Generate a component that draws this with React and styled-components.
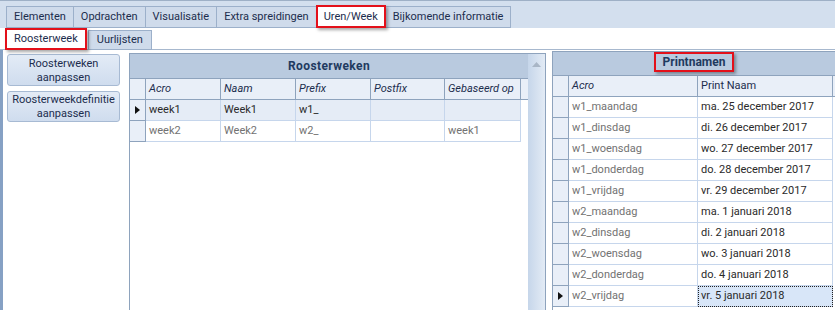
import React from 'react';
import styled, { createGlobalStyle, css } from 'styled-components';

const RED = '#e3101a';
const LINE = '#8ea3bd';
const CELL_LINE = '#c6d6ec';
const NAVY = '#1c2d4d';

const GlobalStyle = createGlobalStyle`
  html, body { margin: 0; padding: 0; background: #fff; }
  body { font-family: Roboto, "Liberation Sans", sans-serif; font-size: 11px; }
  #root { width: 835px; height: 310px; overflow: hidden; }
`;

const redBox = css`
  border: 2px solid ${RED};
  box-shadow: 2px 2px 3px rgba(0, 0, 0, 0.35);
`;

const Page = styled.div`
  width: 835px;
  height: 310px;
  display: flex;
  flex-direction: column;
  overflow: hidden;
  background: #fff;
`;

const MainStrip = styled.div`
  height: 28px;
  box-sizing: border-box;
  border-top: 1px solid #9eb0c6;
  background: #d3dfee;
  padding: 0 0 0 6px;
  display: flex;
  align-items: flex-end;
`;

const Tab = styled.div`
  position: relative;
  height: ${p => (p.$marked ? 23 : 22)}px;
  box-sizing: border-box;
  padding: 0 ${p => (p.$marked ? 6 : 7)}px;
  margin-right: -1px;
  border: 1px solid #9cb0ca;
  background: ${p => (p.$active ? '#fff' : '#cfdbeb')};
  color: ${NAVY};
  line-height: ${p => (p.$marked ? 19 : 20)}px;
  white-space: nowrap;
  ${p => p.$active && css`border-bottom-color: #fff;`}
  ${p => p.$marked && css`${redBox}; z-index: 2;`}
`;

const SubStrip = styled.div`
  height: 22px;
  box-sizing: border-box;
  padding-left: 5px;
  display: flex;
  align-items: flex-end;
  border-bottom: 1px solid #a7b8ce;
`;

const SubTab = styled(Tab)`
  height: ${p => (p.$marked ? 22 : 20)}px;
  margin-bottom: -1px;
  line-height: 18px;
  padding: 0 ${p => (p.$marked ? 7 : 8)}px;
  ${p => p.$marked && css`margin-right: 1px;`}
`;

const Content = styled.div`
  flex: 1;
  display: flex;
  min-height: 0;
`;

const LeftPanel = styled.div`
  width: 129px;
  flex: none;
  box-sizing: border-box;
  border-left: 3px solid #86a1c4;
  padding: 4px 0 0 4px;
  display: flex;
  flex-direction: column;
  gap: 5px;
`;

const ActionButton = styled.div`
  width: 113px;
  height: ${p => p.$h}px;
  box-sizing: border-box;
  border: 1px solid #a7bad3;
  border-radius: 3px;
  background: linear-gradient(#e3ebf6, #cfdcee);
  color: ${NAVY};
  text-align: center;
  line-height: 14px;
  padding-top: 1px;
  display: flex;
  align-items: center;
  justify-content: center;
`;

const GridPanel = styled.div`
  margin-top: ${p => p.$top}px;
  margin-left: ${p => p.$left}px;
  border: 1px solid ${LINE};
  border-bottom: none;
  border-right: ${p => (p.$noRight ? 'none' : `1px solid ${LINE}`)};
  display: flex;
  flex: ${p => (p.$grow ? 1 : 'none')};
  min-width: 0;
  overflow: hidden;
`;

const GridBody = styled.div`
  display: flex;
  flex-direction: column;
  flex: 1;
  min-width: 0;
`;

const Caption = styled.div`
  height: ${p => p.$h}px;
  flex: none;
  background: #b9cadf;
  display: flex;
  justify-content: center;
  align-items: ${p => (p.$alignTop ? 'flex-start' : 'center')};
  color: #1f3a60;
  font-weight: bold;
  font-size: 12px;
  letter-spacing: ${p => p.$spacing || 0}px;
  border-bottom: 1px solid ${LINE};
  box-sizing: border-box;
`;

const CaptionMark = styled.div`
  height: 20px;
  box-sizing: border-box;
  padding: 0 7px;
  display: flex;
  align-items: center;
  ${redBox};
`;

const Row = styled.div`
  display: flex;
  height: 21px;
  flex: none;
`;

const HeadCell = styled.div`
  width: ${p => p.$w}px;
  flex: ${p => (p.$fill ? 1 : 'none')};
  box-sizing: border-box;
  border-right: ${p => (p.$fill ? 'none' : `1px solid ${LINE}`)};
  border-bottom: 1px solid ${LINE};
  background: #e9eff8;
  color: ${NAVY};
  font-style: ${p => (p.$plain ? 'normal' : 'italic')};
  padding-left: 3px;
  line-height: 20px;
  white-space: nowrap;
  overflow: hidden;
`;

const Indicator = styled.div`
  width: 16px;
  flex: none;
  box-sizing: border-box;
  border-right: 1px solid ${LINE};
  border-bottom: 1px solid ${LINE};
  background: #e9eff8;
  display: flex;
  align-items: center;
  justify-content: center;
`;

const Cell = styled.div`
  width: ${p => p.$w}px;
  flex: none;
  box-sizing: border-box;
  border-right: 1px solid ${CELL_LINE};
  border-bottom: 1px solid ${CELL_LINE};
  background: ${p => (p.$focus ? '#d8e6f8' : p.$sel ? '#e5ecf6' : '#fff')};
  color: ${p => (p.$dark ? '#2a2a2a' : '#727272')};
  padding-left: 3px;
  line-height: 20px;
  white-space: nowrap;
  overflow: hidden;
  ${p => p.$focus && css`outline: 1px dotted #222; outline-offset: -1px;`}
`;

const Scrollbar = styled.div`
  width: 17px;
  flex: none;
  background: linear-gradient(to right, #c6d6ea, #e3ebf5);
  display: flex;
  justify-content: center;
  padding-top: 8px;
  box-sizing: border-box;
`;

const RowMarker = () => (
  <svg width="5" height="8" viewBox="0 0 5 8">
    <path d="M0 0 L5 4 L0 8 Z" fill="#111" />
  </svg>
);

const UpArrow = () => (
  <svg width="9" height="5" viewBox="0 0 9 5">
    <path d="M0 5 L4.5 0 L9 5 Z" fill="#a9b6c6" />
  </svg>
);

const mainTabs = ['Elementen', 'Opdrachten', 'Visualisatie', 'Extra spreidingen', 'Uren/Week', 'Bijkomende informatie'];

const weekCols = [
  { key: 'acro', label: 'Acro', w: 75 },
  { key: 'naam', label: 'Naam', w: 75 },
  { key: 'prefix', label: 'Prefix', w: 75 },
  { key: 'postfix', label: 'Postfix', w: 74 },
  { key: 'base', label: 'Gebaseerd op', w: 76 },
];

const weeks = [
  { acro: 'week1', naam: 'Week1', prefix: 'w1_', postfix: '', base: '', current: true },
  { acro: 'week2', naam: 'Week2', prefix: 'w2_', postfix: '', base: 'week1' },
];

const printNames = [
  ['w1_maandag', 'ma. 25 december 2017'],
  ['w1_dinsdag', 'di. 26 december 2017'],
  ['w1_woensdag', 'wo. 27 december 2017'],
  ['w1_donderdag', 'do. 28 december 2017'],
  ['w1_vrijdag', 'vr. 29 december 2017'],
  ['w2_maandag', 'ma. 1 januari 2018'],
  ['w2_dinsdag', 'di. 2 januari 2018'],
  ['w2_woensdag', 'wo. 3 januari 2018'],
  ['w2_donderdag', 'do. 4 januari 2018'],
  ['w2_vrijdag', 'vr. 5 januari 2018'],
];

export default function App() {
  return (
    <Page>
      <GlobalStyle />
      <MainStrip>
        {mainTabs.map(t => (
          <Tab key={t} $active={t === 'Uren/Week'} $marked={t === 'Uren/Week'}>{t}</Tab>
        ))}
      </MainStrip>
      <SubStrip>
        <SubTab $active $marked>Roosterweek</SubTab>
        <SubTab>Uurlijsten</SubTab>
      </SubStrip>
      <Content>
        <LeftPanel>
          <ActionButton $h={32}>Roosterweken<br />aanpassen</ActionButton>
          <ActionButton $h={31}>Roosterweekdefinitie<br />aanpassen</ActionButton>
        </LeftPanel>

        <GridPanel $top={3} $left={0}>
          <GridBody>
            <Caption $h={25} $spacing={0.4}>Roosterweken</Caption>
            <Row>
              <Indicator />
              {weekCols.map(c => <HeadCell key={c.key} $w={c.w}>{c.label}</HeadCell>)}
              <HeadCell $w={7} $fill />
            </Row>
            {weeks.map(r => (
              <Row key={r.acro}>
                <Indicator>{r.current && <RowMarker />}</Indicator>
                {weekCols.map(c => (
                  <Cell key={c.key} $w={c.w} $sel={r.current} $dark={r.current}>{r[c.key]}</Cell>
                ))}
              </Row>
            ))}
          </GridBody>
          <Scrollbar><UpArrow /></Scrollbar>
        </GridPanel>

        <GridPanel $top={1} $left={6} $grow $noRight>
          <GridBody>
            <Caption $h={24} $alignTop>
              <CaptionMark>Printnamen</CaptionMark>
            </Caption>
            <Row>
              <Indicator />
              <HeadCell $w={129}>Acro</HeadCell>
              <HeadCell $w={135} $plain>Print Naam</HeadCell>
              <HeadCell $w={2} $fill />
            </Row>
            {printNames.map(([acro, name], i) => {
              const last = i === printNames.length - 1;
              return (
                <Row key={acro}>
                  <Indicator>{last && <RowMarker />}</Indicator>
                  <Cell $w={129}>{acro}</Cell>
                  <Cell $w={135} $dark $focus={last}>{name}</Cell>
                </Row>
              );
            })}
          </GridBody>
        </GridPanel>
      </Content>
    </Page>
  );
}
